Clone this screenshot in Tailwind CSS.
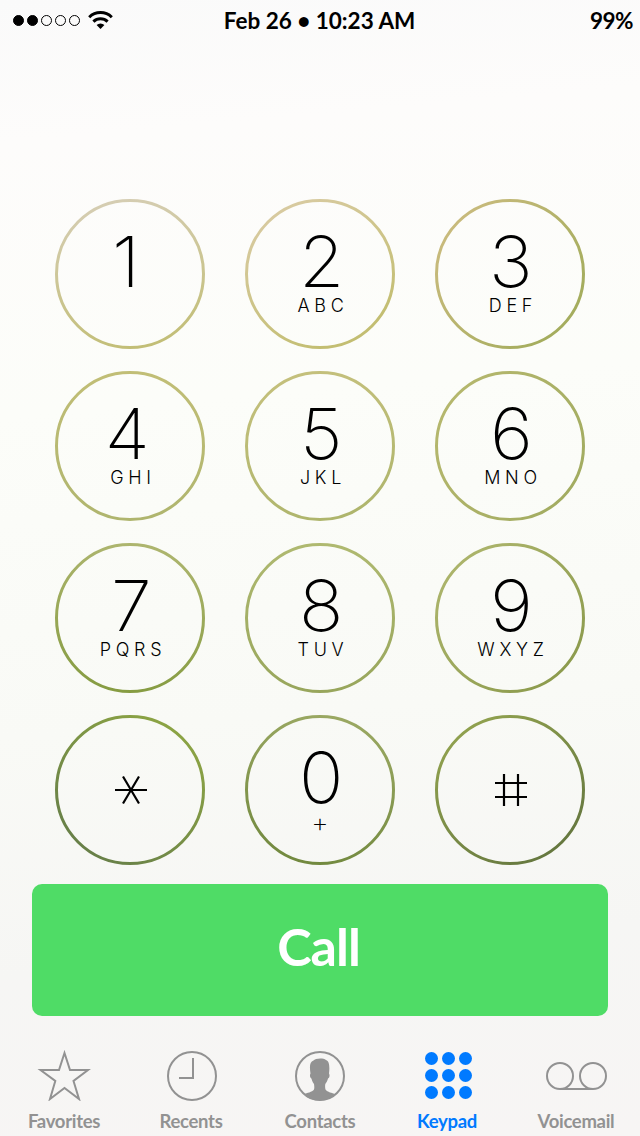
<!DOCTYPE html>
<html lang="en">
<head>
  <meta charset="UTF-8" />
  <meta name="viewport" content="width=device-width, initial-scale=1.0"/>
  <title>Keypad</title>
  <script src="https://cdn.jsdelivr.net/npm/@tailwindcss/browser@4"></script>
</head>
<body class="w-[640px] h-[1136px] overflow-hidden bg-[linear-gradient(175deg,#fafafa_0%,#fdfcfb_12%,#fcfdf9_35%,#f9faf6_62%,#f6f6f4_82%,#f7f5f4_100%)] text-black font-['Lato',sans-serif] flex flex-col">

  <!-- Status Bar -->
  <header class="h-10 grid grid-cols-3 items-center pl-[13px] pr-[7px] text-[22.5px] font-bold leading-9">
    <div class="flex items-center gap-[7px]">
      <svg class="w-[68px] h-3" viewBox="0 0 68 12" stroke="#000">
        <circle cx="5.5" cy="6.5" r="5"/>
        <circle cx="19.5" cy="6.5" r="5"/>
        <circle cx="33.5" cy="6.5" r="5" fill="none"/>
        <circle cx="47.5" cy="6.5" r="5" fill="none"/>
        <circle cx="61.5" cy="6.5" r="5" fill="none"/>
      </svg>
      <svg class="w-[25px] h-[18px]" viewBox="0 0 25 18" fill="none" stroke="#000" stroke-width="3">
        <path d="M1.2 6.2a16.2 16.2 0 0 1 22.6 0"/>
        <path d="M5.4 10.6a10.2 10.2 0 0 1 14.2 0"/>
        <path d="M12.5 18L8.6 14a5.6 5.6 0 0 1 7.8 0z" fill="#000" stroke="none"/>
      </svg>
    </div>
    <div class="text-center whitespace-nowrap pt-0.5 pr-[7px]">Feb 26 • 10:23 AM</div>
    <div class="text-right tracking-[-0.5px] pt-0.5">99%</div>
  </header>

  <!-- Dial Pad -->
  <main id="keys" class="mt-[159px] mx-[55px] grid grid-cols-3 gap-x-10 gap-y-[22px]"></main>

  <!-- Call Button -->
  <button class="mt-[19px] mx-8 h-[132px] shrink-0 rounded-[10px] bg-[#4fdc66] text-white text-[52px] font-bold tracking-[-1px] leading-none pb-2 pr-[3px]">Call</button>

  <!-- Tab Bar -->
  <nav class="mt-[34px] grid grid-cols-5 text-[#929292] text-[18.5px] font-bold tracking-[-0.3px] leading-6 text-center">
    <a class="flex flex-col items-center gap-2">
      <svg class="w-[54px] h-[51px]" viewBox="0 0 54 51" fill="none" stroke="currentColor" stroke-width="2">
        <path d="M27.500 3L33 20H51L36.500 31L42 49L27.500 38L13 49L18.300 31L3.500 20H22Z"/>
      </svg>
      <span>Favorites</span>
    </a>
    <a class="flex flex-col items-center gap-2">
      <svg class="w-[50px] h-[51px]" viewBox="0 0 50 51" fill="none" stroke="currentColor" stroke-width="2">
        <circle cx="25" cy="26" r="24"/>
        <path d="M26 8V28H12"/>
      </svg>
      <span class="pr-0.5">Recents</span>
    </a>
    <a class="flex flex-col items-center gap-2">
      <svg class="w-[50px] h-[51px]" viewBox="1 0 50 51" fill="none" stroke="currentColor" stroke-width="2">
        <circle cx="26" cy="26" r="24"/>
        <path d="M10 44.500C13 42.500 18 42.500 20 39.500C20.500 38 20.300 36 20 34C18.400 32 17.800 29.500 17.400 28.500C16 28 15.500 25 16.500 23.500C15.500 17 15.500 12 19.500 10.500C21 8.300 29 7.500 32 10C35.500 11 35.800 17 35 23.500C36 25 35.500 28 34 28.500C33.500 30.500 32.500 32.500 31.300 34C31 36 31 38 31.500 39.500C33.500 42.500 38 42.500 41.500 44.500C33 52.500 18 52.500 10 44.500Z" fill="currentColor" stroke="none"/>
      </svg>
      <span>Contacts</span>
    </a>
    <a class="flex flex-col items-center gap-2 text-[#007aff]">
      <svg class="w-12 h-[51px]" viewBox="0 0 48 51" fill="currentColor">
        <circle cx="7.500" cy="8.500" r="6.500"/><circle cx="24.500" cy="8.500" r="6.500"/><circle cx="41.500" cy="8.500" r="6.500"/>
        <circle cx="7.500" cy="25.500" r="6.500"/><circle cx="24.500" cy="25.500" r="6.500"/><circle cx="41.500" cy="25.500" r="6.500"/>
        <circle cx="7.500" cy="42.500" r="6.500"/><circle cx="24.500" cy="42.500" r="6.500"/><circle cx="41.500" cy="42.500" r="6.500"/>
      </svg>
      <span class="pr-0.5">Keypad</span>
    </a>
    <a class="flex flex-col items-center gap-2">
      <svg class="w-[62px] h-[51px]" viewBox="0 0 62 51" fill="none" stroke="currentColor" stroke-width="2">
        <circle cx="15" cy="26" r="13"/>
        <circle cx="48" cy="26" r="13"/>
        <path d="M15 39H48"/>
      </svg>
      <span>Voicemail</span>
    </a>
  </nav>

  <script>
    // dir is the gradient vector of the ring: x1, y1, x2, y2
    const keys = [
      { digit: "1", letters: "", shift: "pr-[11px]", from: "#d5cdb2", to: "#c2be76", dir: [0.4, 0, 0.6, 1] },
      { digit: "2", letters: "ABC", from: "#d9cba3", to: "#c3be72", dir: [0.2, 0, 0.7, 0.9] },
      { digit: "3", letters: "DEF", shift: "pr-0.5", from: "#cabb7e", to: "#a5ad5e", dir: [0.1, 0.1, 0.9, 0.7] },
      { digit: "4", letters: "GHI", shift: "pr-[9px]", from: "#c1be76", to: "#afb56e", dir: [0.5, 0, 0.5, 1] },
      { digit: "5", letters: "JKL", from: "#c4c07c", to: "#aeb56c", dir: [0.4, 0, 0.6, 1] },
      { digit: "6", letters: "MNO", from: "#b6b86e", to: "#a1ab60", dir: [0, 0.2, 1, 0.8] },
      { digit: "7", letters: "PQRS", from: "#adb56e", to: "#869c42", dir: [0.5, 0, 0.4, 1] },
      { digit: "8", letters: "TUV", from: "#afb970", to: "#98a65c", dir: [0.5, 0, 0.5, 1] },
      { digit: "9", letters: "WXYZ", from: "#adb56c", to: "#8b9a4c", dir: [0.1, 0.1, 0.9, 0.9] },
      { icon: "M60 75H92M68 61.500L84 88.500M84 61.500L68 88.500", from: "#8ba344", to: "#688048", dir: [0.8, 0.1, 0.2, 0.9] },
      { digit: "0", plus: true, from: "#9aa862", to: "#72893f", dir: [0.6, 0, 0.4, 1] },
      { icon: "M60 82H92M60 68H92M69 59V91M83 59V91", from: "#8fa04e", to: "#66783f", dir: [0.2, 0.1, 0.8, 0.9] },
    ];

    document.getElementById("keys").innerHTML = keys.map((key, i) => `
      <button class="relative size-[150px] pt-[27.5px] pl-[3px] flex flex-col items-center font-['Inter',sans-serif]">
        <svg class="absolute inset-0 size-full" viewBox="0 0 150 150" fill="none">
          <linearGradient id="ring${i}" x1="${key.dir[0]}" y1="${key.dir[1]}" x2="${key.dir[2]}" y2="${key.dir[3]}">
            <stop stop-color="${key.from}"/>
            <stop offset="1" stop-color="${key.to}"/>
          </linearGradient>
          <circle cx="75" cy="75" r="73.500" stroke="url(#ring${i})" stroke-width="3"/>
          ${key.icon ? `<path d="${key.icon}" stroke="#000" stroke-width="2.200"/>` : ""}
        </svg>
        ${key.digit ? `<span class="text-[70px] leading-[70px] font-extralight scale-x-[1.05] ${key.shift || ""}">${key.digit}</span>` : ""}
        ${key.letters ? `<span class="text-[18px] leading-[18px] font-light tracking-[4.7px] pl-[3px]">${key.letters}</span>` : ""}
        ${key.plus ? `<span class="text-[27px] leading-[20px] font-extralight pr-[3px]">+</span>` : ""}
      </button>`).join("");
  </script>
</body>
</html>
